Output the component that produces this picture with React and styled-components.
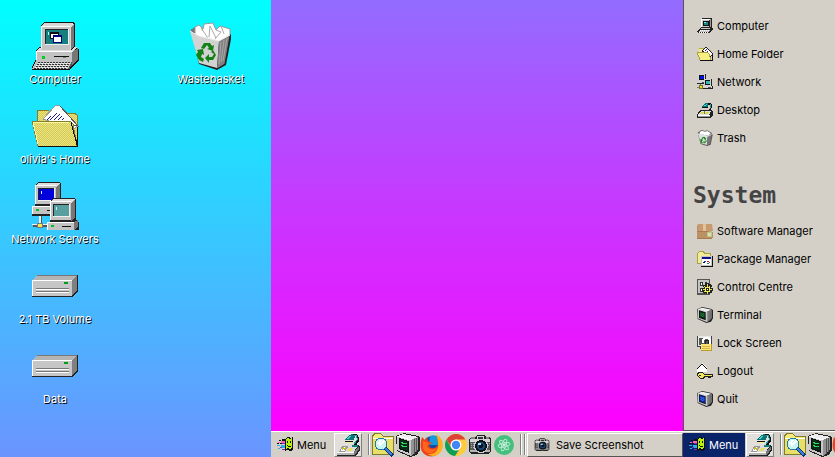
import React from 'react'
import styled, { createGlobalStyle } from 'styled-components'

const GlobalStyle = createGlobalStyle`
  body {
    margin: 0;
    font-family: Inter, 'Liberation Sans', sans-serif;
    font-size: 11px;
    line-height: 16px;
    color: #000;
  }

  * {
    box-sizing: border-box;
  }
`

const Glyph = styled.svg.attrs({ 'aria-hidden': true })`
  display: block;
  flex: none;
  width: ${props => props.$size}px;
  height: ${props => props.$size}px;
  shape-rendering: ${props => (props.$smooth ? 'auto' : 'crispEdges')};
`

/* ---------- desktop icons, 48 x 48 ---------- */

const ComputerIcon = () => (
  <Glyph $size={48} viewBox="0 0 48 48">
    <path d="M10 3l3-3h29l2 2v23l4 2v11l-9 10H1v-3l4-8v-9l4-3h1z" fill="#111" />
    <path d="M10 4l3-3h28l2 2-3 2v24H10z" fill="#d8d8d8" />
    <path d="M40 5l3-3v22l-3 4z" fill="#777" />
    <path d="M11 4h28v24H11z" fill="#c3c3c3" />
    <path d="M10 4h29v1H11v22h-1z" fill="#fff" />
    <path d="M14 7h24v16H14z" fill="#eee" />
    <path d="M14 7h23v15H14z" fill="#222" />
    <path d="M15 8h22v14H15z" fill="#167f80" />
    <path d="M17 10h1v3h-1z" fill="#aff" />
    <path d="M19 10h9v7h-9z" fill="#111" />
    <path d="M20 12h7v4h-7z" fill="#fff" />
    <path d="M22 13h9v8h-9z" fill="#00007c" />
    <path d="M23 15h7v5h-7z" fill="#fff" />
    <path d="M5 29l4-3h2v2h29l3-3h4l-6 5H5z" fill="#ddd" />
    <path d="M5 30h36v9H5z" fill="#c3c3c3" />
    <path d="M5 29h36v1H6v8H5z" fill="#fff" />
    <path d="M41 30l6-4v11l-6 7z" fill="#777" />
    <path d="M11 34h3v3h-3z" fill="#00d01c" />
    <path d="M23 34h15v1H23z" fill="#111" />
    <path d="M32 35h3v1h-3z" fill="#777" />
    <path d="M5 39h36l-4 8H1z" fill="#c3c3c3" />
    <path d="M7 40h33M6 42h32M5 44h32M3 46h33" stroke="#333" strokeWidth="1" strokeDasharray="2 1" />
    <path d="M7 41h32M5 43h32M4 45h32" stroke="#eee" strokeWidth="1" strokeDasharray="2 1" />
    <path d="M37 47l4-8v4l-3 5z" fill="#555" />
  </Glyph>
)

const HomeIcon = () => (
  <Glyph $size={48} viewBox="0 0 48 48">
    <defs>
      <pattern id="manila" width="2" height="2" patternUnits="userSpaceOnUse">
        <path d="M0 0h2v2H0z" fill="#ece679" />
        <path d="M0 0h1v1H0zM1 1h1v1H1z" fill="#d3c95e" />
      </pattern>
    </defs>
    <path d="M6 10l3-2h8l3 3h24l3 3v28l-3 2H8z" fill="#111" />
    <path d="M6 9l3-1h8l3 3h23l3 2v24H6z" fill="url(#manila)" stroke="#847d2b" />
    <path d="M12 17L25 3l4 1 18 20-5 3z" fill="#fff" stroke="#999" />
    <path d="M16 18l4-4M19 18l7-7M23 18l6-6M27 18l4-4M31 18l2-2" stroke="#1515a0" fill="none" />
    <path d="M29 4l18 20-4-1" stroke="#555" fill="none" />
    <path d="M1 19h38l3 3 4 22H7z" fill="url(#manila)" stroke="#847d2b" />
    <path d="M2 20h36M2 20l5 22" stroke="#fff8a0" fill="none" />
    <path d="M40 20l6 23M7 44h39V25" stroke="#111" fill="none" />
  </Glyph>
)

const Workstation = ({ x, y, screen }) => (
  <g transform={`translate(${x} ${y})`}>
    <path d="M3 3l3-3h22l1 2v20l3 3v6l-3 3H0V24h3z" fill="#222" />
    <path d="M4 3l3-2h20l1 1-4 3v17H4z" fill="#ddd" />
    <path d="M4 4h20v18H4z" fill="#c3c3c3" />
    <path d="M3 3h21v1H4v18H3z" fill="#fff" />
    <path d="M24 5l4-3v18l-4 3z" fill="#777" />
    <path d="M6 6h17v13H6z" fill="#eee" />
    <path d="M6 6h16v12H6z" fill="#222" />
    <path d="M7 7h15v11H7z" fill={screen} />
    <path d="M9 9h1v3H9z" fill="#aff" />
    <path d="M1 24h26v8H1z" fill="#c3c3c3" />
    <path d="M0 24h27v1H1v7H0z" fill="#fff" />
    <path d="M27 24l4-2v6l-4 4z" fill="#777" />
    <path d="M4 27h3v2H4z" fill="#00c020" />
    <path d="M15 28h9v1h-9z" fill="#111" />
  </g>
)

const NetworkIcon = () => (
  <Glyph $size={48} viewBox="0 0 48 48">
    <path d="M8 30h3v12h5v3H2v-3h6z" fill="#555" />
    <path d="M8 30h2v12h6v1H1v-1h7z" fill="#eee" />
    <path d="M6 41h5v4H6z" fill="#f4ec52" stroke="#777" />
    <Workstation x={1} y={0} screen="#0000dc" />
    <Workstation x={16} y={16} screen="#58a0a0" />
  </Glyph>
)

const DriveIcon = () => (
  <Glyph $size={48} viewBox="0 0 48 48">
    <path d="M1 18l6-5h40v16l-6 6H1z" fill="#222" />
    <path d="M1 18l6-5h39l-5 5z" fill="#b4b4b4" />
    <path d="M1 18h40v16H1z" fill="#c6c6c6" />
    <path d="M1 18h40v1H2v15H1z" fill="#fff" />
    <path d="M41 18l5-5v15l-5 6z" fill="#808080" />
    <path d="M6 13h40" stroke="#777" />
    <path d="M33 20h4v2h-4z" fill="#009c18" />
    <path d="M5 26h33v1H5zM5 29h33v1H5z" fill="#777" />
    <path d="M5 27h33v1H5zM5 30h33v1H5z" fill="#fff" />
  </Glyph>
)

const Recycle = () => (
  <g fill="#128217">
    <path d="M14 26l3-5h6l2 3 2-1-1 6-6-2 2-1-2-3-3 4z" />
    <path d="M26 28l3 5-3 5h-4v3l-4-5 4-4v3h3l2-3-3-2z" />
    <path d="M10 28l6-1 1 6-2-1-1 3 3 2-1 3-4-2-3-5 2-3z" />
  </g>
)

const WastebasketIcon = () => (
  <Glyph $size={48} viewBox="0 0 48 48" $smooth>
    <path d="M4 8l5-3 35 7v5l-5 26-9 5-18-6z" fill="#222" />
    <path d="M3 9l5-4 34 7-8 7z" fill="#777" />
    <path d="M8 14V5l4-2 4 4 1-5 9-1 3 7 4-4 10 3v6l-8 6-10 3z" fill="#fff" stroke="#999" />
    <path d="M15 9l2-5M22 15l1-11 6 12M29 8l5 2-6 7M34 4l3 8M14 6l7 10" stroke="#aaa" fill="none" />
    <path d="M3 9l9 5 20 5-2 27-18-5z" fill="#d2d2d2" />
    <path d="M32 19l11-6-5 29-8 5z" fill="#818181" />
    <path d="M34 20l-2 22M37 18l-3 22M40 16l-4 23" stroke="#a6a6a6" fill="none" />
    <path d="M3 9l9 5 20 5 11-6" stroke="#eee" fill="none" />
    <path d="M43 14l-5 28-8 5" stroke="#222" fill="none" />
    <Recycle />
  </Glyph>
)

/* ---------- menu icons, 16 x 16 ---------- */

const SmallComputer = () => (
  <Glyph $size={16} viewBox="0 0 16 16">
    <path d="M4 1l1-1h9l1 1v9l1 1-3 4H1l-1-1 3-4h1z" fill="#222" />
    <path d="M4 1h8v8H4z" fill="#c8c8c8" />
    <path d="M4 1h9v1H5v7H4z" fill="#fff" />
    <path d="M13 1h1v8h-1z" fill="#999" />
    <path d="M6 3h6v5H6z" fill="#111" />
    <path d="M7 4h4v3H7z" fill="#178684" />
    <path d="M7 4h2v1H7z" fill="#7fe8e0" />
    <path d="M4 10h9v1H4zM3 12h10l-1 2H1z" fill="#c8c8c8" />
    <path d="M3 12h10M2 14h10" stroke="#fff" strokeDasharray="1 1" />
  </Glyph>
)

const SmallHome = () => (
  <Glyph $size={16} viewBox="0 0 16 16">
    <path d="M2 2h5l2 2h5v10H2z" fill="#b9ad38" />
    <path d="M2 3h5l2 2h4v8H2z" fill="#f3ec95" />
    <path d="M5 5l4-4 7 7-3 3z" fill="#fff" stroke="#222" />
    <path d="M8 5l2-2M10 6l1-1" stroke="#2020a0" />
    <path d="M0 6h10l2 2 2 6H3z" fill="#f4ee83" stroke="#aaa03a" />
    <path d="M3 14h12V9" stroke="#111" fill="none" />
  </Glyph>
)

const MiniStation = ({ x, y, screen }) => (
  <g transform={`translate(${x} ${y})`}>
    <path d="M1 0h8v7h1v3H0V7h1z" fill="#222" />
    <path d="M1 0h7v7H1zM0 7h9v2H0z" fill="#d4d4d4" />
    <path d="M2 1h5v5H2z" fill="#111" />
    <path d="M3 2h4v3H3z" fill={screen} />
    <path d="M5 8h3" stroke="#555" />
  </g>
)

const SmallNetwork = () => (
  <Glyph $size={16} viewBox="0 0 16 16">
    <path d="M3 9v5h4M0 13h5" stroke="#777" fill="none" />
    <path d="M2 11h3v3H2z" fill="#e8dc28" stroke="#77701c" />
    <MiniStation x={0} y={0} screen="#0012d8" />
    <MiniStation x={6} y={5} screen="#3bbab4" />
  </Glyph>
)

const SmallLamp = () => (
  <Glyph $size={16} viewBox="0 0 16 16">
    <path d="M3 8h11l2 1v4l-2 3H0v-3z" fill="#222" />
    <path d="M4 9h10l-2 4H1z" fill="#e2e2e2" />
    <path d="M1 13h12v1H1z" fill="#fff" />
    <path d="M1 14h12v1H1z" fill="#999" />
    <path d="M4 10h3l-1 2H3zM9 10h3l-1 2H8z" fill="#d9d84a" />
    <path d="M7 9h1v3H7z" fill="#7a7a3a" />
    <path d="M11 1h3v1h1v4h-1v2h-2V7h1V3h-2z" fill="#111" />
    <path d="M13 2h1v4h-1z" fill="#22a3a0" />
    <path d="M5 4l4-3h2v4H5z" fill="#0b7678" />
    <path d="M7 3h2V2h1v1H9v1H7z" fill="#4ed2c8" />
    <path d="M5 5h6v1H5z" fill="#111" />
  </Glyph>
)

const LampIcon = () => (
  <Glyph $size={24} viewBox="0 0 24 24">
    <path d="M1 20l5-8h16l2 2v3l-4 6H1z" fill="#222" />
    <path d="M1 19l5-7h16l-4 7z" fill="#dcdcdc" />
    <path d="M1 19h17v1H1z" fill="#fff" />
    <path d="M1 20h17v2H1z" fill="#b4b4b4" />
    <path d="M18 19l5-6v3l-4 6h-1z" fill="#777" />
    <path d="M7 13h5l-3 5H4z" fill="#fff" stroke="#999" />
    <path d="M13 15h4l-2 3h-4z" fill="#e8df5b" />
    <path d="M6 17l2-3M8 17l2-3" stroke="#c8bb36" />
    <path d="M16 2h4l2 3v3l-3 4" stroke="#111" strokeWidth="2" fill="none" />
    <path d="M17 2h3l1 3v2l-3 4" stroke="#22a3a0" fill="none" />
    <path d="M9 7l3-4 4-2 3 3-1 3z" fill="#0b7678" />
    <path d="M10 6l3-3h2l-2 3z" fill="#4ed2c8" />
    <path d="M9 8h8" stroke="#111" />
    <path d="M11 9h4v1h-4z" fill="#f6f07c" />
    <path d="M16 12h6v2h-6z" fill="#127f7d" />
  </Glyph>
)

const SmallTrash = () => (
  <Glyph $size={16} viewBox="0 0 48 48" $smooth>
    <path d="M2 8L10 2l32 5 5 8-6 29-11 4-19-6z" fill="#555" />
    <path d="M7 13V5l8-4 8 3 8-2 12 7-9 10z" fill="#fff" stroke="#777" strokeWidth="3" />
    <path d="M3 11l29 8-2 26-18-5z" fill="#d9ddd9" />
    <path d="M32 19l12-5-5 27-9 5z" fill="#777" />
    <path d="M3 11l29 8 12-6" stroke="#fff" strokeWidth="2" fill="none" />
    <Recycle />
  </Glyph>
)

const SoftwareIcon = () => (
  <Glyph $size={16} viewBox="0 0 16 16" $smooth>
    <path d="M1 1h14v15H0V4z" fill="#a97b4f" />
    <path d="M1 1h14l1 7H0z" fill="#c79a70" />
    <path d="M6 1h3v7H6z" fill="#e0c39c" />
    <path d="M0 9h16v6H0z" fill="#ba9064" />
    <path d="M10 9l5-1v6h-5z" fill="#b9c78f" />
    <path d="M11 10h3v3h-3z" fill="#d8e4ad" />
  </Glyph>
)

const PackageIcon = () => (
  <Glyph $size={16} viewBox="0 0 16 16">
    <path d="M0 2l2-2h4l2 2h6v11H0z" fill="#aaa140" />
    <path d="M1 2l1-1h4l1 2h6v9H1z" fill="#f1eb99" />
    <path d="M4 5h12v11H4z" fill="#111" />
    <path d="M4 5h11v10H4z" fill="#c5c5c5" />
    <path d="M5 6h9v2H5z" fill="#10108a" />
    <path d="M5 8h9v6H5z" fill="#fff" />
    <path d="M6 11h2v1H6z" fill="#111" />
    <path d="M7 10h2v1H7z" fill="#1b35c8" />
    <path d="M10 10h2v1h-2zM12 11h1v1h-1z" fill="#d02020" />
    <path d="M10 12h2v1h-2z" fill="#078a84" />
  </Glyph>
)

const ControlIcon = () => (
  <Glyph $size={16} viewBox="0 0 16 16">
    <path d="M0 0h13v16H0z" fill="#555" />
    <path d="M1 1h11v13H1z" fill="#c4c4c4" />
    <path d="M3 3h3v4H3zM3 9h4v4H3zM8 3h2v2H8z" fill="#333" />
    <path d="M4 4h1v2H4zM4 10h1v2H4z" fill="#fff" />
    <path d="M10 4v11M5 10h11M7 6l7 8M14 6l-8 8" stroke="#222" strokeWidth="3" />
    <path d="M10 5v10M6 10h9M7 7l6 6M13 7l-6 6" stroke="#e9e34d" strokeWidth="1" />
    <path d="M8 8h5v5H8z" fill="#f2ed5a" />
    <path d="M9 9h3v3H9z" fill="#222" />
    <path d="M10 10h1v1h-1z" fill="#fff" />
  </Glyph>
)

const MonitorIcon = ({ size, screen = '#082c16', ink = '#34d75c' }) => (
  <Glyph $size={size} viewBox="0 0 24 24" $smooth={size < 20}>
    <path d="M0 3l8-3 14 3 2 2v12l-3 5-7 2L1 18z" fill="#222" />
    <path d="M1 3l7-2 14 3-7 3z" fill="#eee" />
    <path d="M1 3l14 4v16L1 17z" fill="#c9c9c9" />
    <path d="M15 7l7-3v13l-7 6z" fill="#929292" />
    <path d="M18 6v15M20 5v14" stroke="#555" />
    <path d="M1 3l14 4" stroke="#fff" />
    <path d="M3 5l10 3v12L3 16z" fill="#111" />
    <path d="M4 6l8 3v9l-8-3z" fill={screen} />
    <path d="M5 9l3 2 3-1M5 12l3 2 3-1" stroke={ink} fill="none" />
  </Glyph>
)

const LockIcon = () => (
  <Glyph $size={16} viewBox="0 0 16 16">
    <path d="M0 1h15v11h-3v2H3v-2H0z" fill="#444" />
    <path d="M1 1h13v10H1z" fill="#e8e8e8" />
    <path d="M2 3h11v7H2z" fill="#555" />
    <path d="M6 8V5l2-2h3l2 2v4" fill="none" stroke="#fff" strokeWidth="2" />
    <path d="M8 9V5h3v4" fill="#555" stroke="#222" />
    <path d="M4 9h11v7H4z" fill="#bc9d28" />
    <path d="M4 9h10v6H4z" fill="#fae377" />
    <path d="M5 11h8M5 13h8" stroke="#d7b644" />
  </Glyph>
)

const LogoutIcon = () => (
  <Glyph $size={16} viewBox="0 0 16 16">
    <path d="M0 5l5-5 5 5v4H0z" fill="#fff" />
    <path d="M0 6l5-5 5 5" stroke="#111" fill="none" />
    <path d="M1 9h4l3 2h8v3h-2v1h-3v-1H8l-2 2H3l-3-3v-2z" fill="#222" />
    <path d="M2 10h3l2 2h8v1H7l-2 2H3l-2-2v-2z" fill="#efe85b" />
    <path d="M2 12h2v1H2z" fill="#222" />
  </Glyph>
)

const FlagIcon = () => (
  <Glyph $size={16} viewBox="0 0 16 16">
    <path d="M8 2l3-2 3 1 2-1v12l-2 2-4-1-2 1z" fill="#111" />
    <path d="M9 2l2-1 2 1 2-1v10l-2 1-2-1-2 1z" fill="#bbee13" />
    <path d="M10 4h1v2h-1zM13 4h1v2h-1zM10 8h1v1h3v1h-3v-1h-1z" fill="#111" />
    <path d="M2 3h2v1H2zM5 2h3v2H5zM0 6h2v1H0zM3 6h2v1H3z" fill="#111" />
    <path d="M4 4h4v2H4zM1 5h2v1H1z" fill="#ff66a8" />
    <path d="M4 8h4v3H4zM0 8h3v1H0zM1 11h2v1H1z" fill="#24b6e6" />
    <path d="M3 10h2v1H3zM5 12h3v1H5zM5 6h3v1H5z" fill="#7a2ebd" />
  </Glyph>
)

/* ---------- launcher icons ---------- */

const SearchIcon = () => (
  <Glyph $size={24} viewBox="0 0 24 24">
    <path d="M0 3l2-3h7l2 3h11v19H0z" fill="#827b2d" />
    <path d="M1 3l2-2h6l2 3h10v17H1z" fill="#f4ec78" />
    <path d="M1 6h20v15H1z" fill="#e8df69" />
    <path d="M1 5h20" stroke="#fff" />
    <path d="M12 14l9 9" stroke="#0b2e76" strokeWidth="4" />
    <path d="M12 14l8 8" stroke="#397fe2" strokeWidth="2" />
    <circle cx="9" cy="11" r="6" fill="#c9f4f6" stroke="#247b99" strokeWidth="1" />
    <path d="M6 11l3-4M7 13l5-5" stroke="#fff" strokeWidth="2" />
  </Glyph>
)

const FirefoxIcon = () => (
  <Glyph $size={24} viewBox="0 0 24 24" $smooth>
    <circle cx="12" cy="12" r="9" fill="#174ca2" />
    <path d="M10 3c6-3 12 3 11 9H9z" fill="#1598dc" />
    <path d="M2 4l3 3 2-3 1 4 4 2-3 2c0 4 5 4 7 2 3-2 2-5 1-8 6 4 5 12 1 15-6 5-15 2-17-5C0 12 1 7 2 4z" fill="#ee421f" />
    <path d="M16 1c8 5 9 14 3 20-4 3-9 2-11 0 9 1 13-6 8-20z" fill="#ffb01f" />
    <path d="M3 8c2 0 3 2 6 2l-2 3c1 4 6 4 10 2-3 7-12 7-14 0z" fill="#ff671b" />
  </Glyph>
)

const ChromeIcon = () => (
  <Glyph $size={24} viewBox="0 0 24 24" $smooth>
    <circle cx="12" cy="12" r="11" fill="#ffcc3d" />
    <path d="M2.5 6.5A11 11 0 0 1 21.5 6.5H12a5.5 5.5 0 0 0-5 7z" fill="#db4437" />
    <path d="M2.5 6.5A11 11 0 0 0 11 23l5.500-8.500a5.500 5.500 0 0 1-9.500 0z" fill="#0f9d58" />
    <circle cx="12" cy="12" r="5.500" fill="#fff" />
    <circle cx="12" cy="12" r="4.200" fill="#4285f4" />
  </Glyph>
)

const CameraIcon = ({ size }) => (
  <Glyph $size={size} viewBox="0 0 24 24" $smooth={size < 20}>
    <path d="M1 6l2-2h4l2-2h7l2 2h3l2 2v13l-3 2H4l-3-2z" fill="#222" />
    <path d="M2 6h20v3H2zM9 3h7v3H9z" fill="#d5d5d5" />
    <path d="M2 9h20v8H2z" fill="#5a5a5a" />
    <path d="M3 10h5M3 12h4M3 14h4M19 10h3M20 12h2" stroke="#aaa" strokeDasharray="1 1" />
    <path d="M3 4h4v2H3zM18 4h3v2h-3z" fill="#888" />
    <path d="M2 17h20v2H2z" fill="#b5b5b5" />
    <path d="M10 4h5v2h-5z" fill="#333" />
    <circle cx="13" cy="13" r="7" fill="#c9ccd0" />
    <circle cx="13" cy="13" r="6" fill="#111" />
    <circle cx="13" cy="13" r="4" fill="#174575" />
    <circle cx="13" cy="13" r="2" fill="#07121f" />
    <path d="M10 10h3v2h-3z" fill="#a5def4" />
  </Glyph>
)

const AtomIcon = () => (
  <Glyph $size={24} viewBox="0 0 24 24" $smooth>
    <circle cx="12" cy="12" r="10" fill="#45bf7c" />
    <g fill="none" stroke="#b9ead0">
      <ellipse cx="12" cy="12" rx="6" ry="2" transform="rotate(-12 12 12)" />
      <ellipse cx="12" cy="12" rx="6" ry="2" transform="rotate(48 12 12)" />
      <ellipse cx="12" cy="12" rx="6" ry="2" transform="rotate(108 12 12)" />
    </g>
    <circle cx="12" cy="12" r="1" fill="#fff" />
  </Glyph>
)

const shortcuts = [
  { label: 'Computer', icon: <ComputerIcon /> },
  { label: 'Wastebasket', icon: <WastebasketIcon /> },
  { label: "olivia's Home", icon: <HomeIcon />, newRow: true },
  { label: 'Network Servers', icon: <NetworkIcon />, newRow: true },
  { label: '2.1 TB Volume', icon: <DriveIcon />, newRow: true },
  { label: 'Data', icon: <DriveIcon />, newRow: true }
]

const places = [
  ['Computer', <SmallComputer />],
  ['Home Folder', <SmallHome />],
  ['Network', <SmallNetwork />],
  ['Desktop', <SmallLamp />],
  ['Trash', <SmallTrash />]
]

const system = [
  ['Software Manager', <SoftwareIcon />],
  ['Package Manager', <PackageIcon />],
  ['Control Centre', <ControlIcon />],
  ['Terminal', <MonitorIcon size={16} />],
  ['Lock Screen', <LockIcon />],
  ['Logout', <LogoutIcon />],
  ['Quit', <MonitorIcon size={16} screen="#0824b8" ink="#65b9ff" />]
]

const launchers = [
  ['Search', <SearchIcon />],
  ['Terminal', <MonitorIcon size={24} />],
  ['Firefox', <FirefoxIcon />],
  ['Chrome', <ChromeIcon />],
  ['Camera', <CameraIcon size={24} />],
  ['Atom', <AtomIcon />]
]

const MenuList = ({ items }) => (
  <List>
    {items.map(([label, icon]) => (
      <li key={label}>
        <MenuItem>
          {icon}
          {label}
        </MenuItem>
      </li>
    ))}
  </List>
)

const Panel = ({ open, task }) => (
  <Taskbar>
    <MenuButton $open={open}>
      <FlagIcon />
      Menu
    </MenuButton>
    <ShowDesktop aria-label="Show desktop">
      <LampIcon />
    </ShowDesktop>
    <Divider />
    <Launchers>
      {launchers.map(([label, icon]) => (
        <Launcher key={label} aria-label={label}>
          {icon}
        </Launcher>
      ))}
    </Launchers>
    <Divider />
    <Divider $tight />
    {task && (
      <TaskButton>
        <CameraIcon size={16} />
        {task}
      </TaskButton>
    )}
  </Taskbar>
)

export default () => (
  <>
    <GlobalStyle />
    <Screens>
      <Desktop>
        {shortcuts.map(({ label, icon, newRow }) => (
          <Shortcut key={label} $newRow={newRow}>
            {icon}
            {label}
          </Shortcut>
        ))}
      </Desktop>
      <Workspace>
        <Wallpaper />
        <Panel task="Save Screenshot" />
      </Workspace>
      <Workspace>
        <StartMenu>
          <MenuList items={places} />
          <Heading>System</Heading>
          <MenuList items={system} />
        </StartMenu>
        <Panel open />
      </Workspace>
    </Screens>
  </>
)

const Screens = styled.main`
  display: grid;
  grid-template-columns: 271px minmax(0, 1fr) 152px;
  min-height: 100vh;
`

const Desktop = styled.section`
  display: grid;
  grid-template-columns: 110px 110px;
  grid-auto-rows: 80px;
  align-content: start;
  column-gap: 46px;
  padding-top: 22px;
  background: linear-gradient(#00ffff, #6b94ff);
`

const Shortcut = styled.button`
  ${props => props.$newRow && `grid-column: 1;`};
  display: flex;
  flex-direction: column;
  align-items: center;
  gap: 1px;
  padding: 0;
  border: 0;
  background: none;
  font: inherit;
  color: #fff;
  text-shadow: 1px 1px 0 #000;
  white-space: nowrap;
`

const Workspace = styled.section`
  display: flex;
  flex-direction: column;
  min-width: 0;
  overflow: hidden;
`

const Wallpaper = styled.div`
  flex: 1;
  background: linear-gradient(#936cff, #ff00ff);
`

const StartMenu = styled.nav`
  flex: 1;
  padding-top: 12px;
  border-left: 1px solid #555;
  border-bottom: 1px solid #555;
  background: #d4d0c8;
`

const List = styled.ul`
  margin: 0;
  padding: 0;
  list-style: none;
`

const MenuItem = styled.button`
  display: flex;
  align-items: center;
  gap: 4px;
  width: 100%;
  height: 28px;
  padding: 0 0 0 13px;
  border: 0;
  background: none;
  font: inherit;
  text-align: left;
  white-space: nowrap;
`

const Heading = styled.h2`
  margin: 29px 0 8px;
  padding-left: 9px;
  font-family: 'DejaVu Sans Mono', monospace;
  font-size: 23px;
  line-height: 28px;
  color: #444;
`

const Taskbar = styled.footer`
  display: flex;
  flex: none;
  height: 26px;
  border-top: 1px solid #fff;
  background: #d4d0c8;
  overflow: hidden;
`

const MenuButton = styled.button`
  display: flex;
  flex: none;
  align-items: center;
  gap: 4px;
  width: 62px;
  margin-top: 1px;
  padding: 0 0 0 6px;
  border: 0;
  background: ${props => (props.$open ? '#0a246a' : 'none')};
  color: ${props => (props.$open ? '#fff' : '#000')};
  font: inherit;
`

const ShowDesktop = styled.button`
  display: flex;
  flex: none;
  align-items: center;
  justify-content: center;
  width: 28px;
  margin: 1px 6px 0 1px;
  padding: 0;
  border: 1px solid;
  border-color: #fff #808080 #808080 #fff;
  background: #e2dfda;
`

const Divider = styled.span`
  flex: none;
  width: 2px;
  margin: 2px ${props => (props.$tight ? '1px' : '2px')} 2px 0;
  border-left: 1px solid #808080;
  border-right: 1px solid #fff;
`

const Launchers = styled.div`
  display: flex;
  flex: none;
  margin-right: 4px;
`

const Launcher = styled.button`
  width: 24px;
  padding: 1px 0 0;
  border: 0;
  background: none;
`

const TaskButton = styled.button`
  display: flex;
  flex: 1;
  align-items: center;
  gap: 6px;
  min-width: 0;
  margin-top: 1px;
  padding: 0 6px;
  border: 1px solid;
  border-color: #fff #555 #555 #fff;
  background: #d4d0c8;
  font: inherit;
  white-space: nowrap;
`
